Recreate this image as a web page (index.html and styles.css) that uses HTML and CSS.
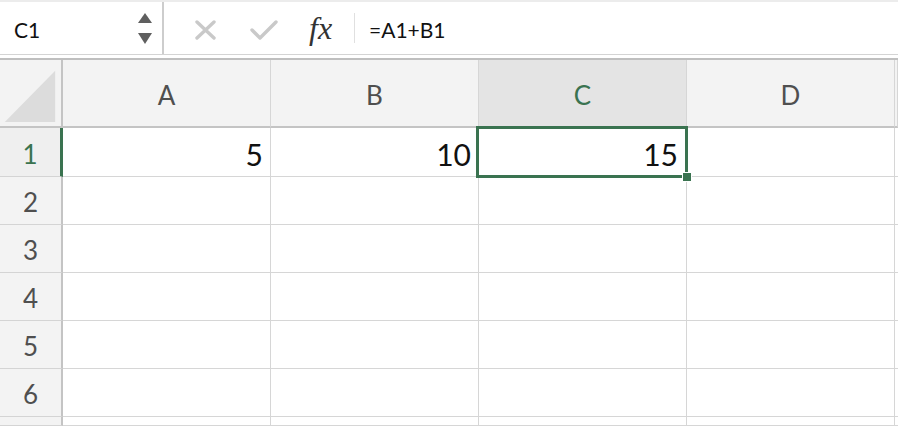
FILE: index.html
```html
<!DOCTYPE html>
<html>
<head>
<meta charset="utf-8">
<link rel="stylesheet" href="styles.css">
</head>
<body>
<div class="toolbar">
  <div class="namebox">
    <span class="name">C1</span>
    <svg class="spin" width="14" height="32" viewBox="0 0 14 32">
      <polygon points="0,10 14,10 7,0" fill="#5f5f5f"/>
      <polygon points="0,20 14,20 7,31" fill="#5f5f5f"/>
    </svg>
  </div>
  <svg class="ic-x" width="21" height="20" viewBox="0 0 21 20">
    <path d="M2 2 L19 18 M19 2 L2 18" stroke="#c9c9c9" stroke-width="3.4" stroke-linecap="round" fill="none"/>
  </svg>
  <svg class="ic-check" width="28" height="20" viewBox="0 0 28 20">
    <path d="M2 10 L10 18 L26 2" stroke="#c9c9c9" stroke-width="3.4" stroke-linecap="round" stroke-linejoin="round" fill="none"/>
  </svg>
  <span class="fx">fx</span>
  <span class="sep"></span>
  <span class="formula">=A1+B1</span>
</div>
<div class="gap"></div>
<div class="sheet">
  <div class="corner"><svg width="63" height="66" viewBox="0 0 63 66"><polygon points="57,10 57,63 5,63" fill="#dcdcdc"/></svg></div>
  <div class="colhead">A</div>
  <div class="colhead">B</div>
  <div class="colhead active">C</div>
  <div class="colhead">D</div>
  <div class="colhead"></div>

  <div class="rowhead active">1</div>
  <div class="cell">5</div>
  <div class="cell">10</div>
  <div class="cell selected">15<div class="sel"><span class="handle"></span></div></div>
  <div class="cell"></div>
  <div class="cell"></div>

  <div class="rowhead">2</div><div class="cell"></div><div class="cell"></div><div class="cell"></div><div class="cell"></div><div class="cell"></div>
  <div class="rowhead">3</div><div class="cell"></div><div class="cell"></div><div class="cell"></div><div class="cell"></div><div class="cell"></div>
  <div class="rowhead">4</div><div class="cell"></div><div class="cell"></div><div class="cell"></div><div class="cell"></div><div class="cell"></div>
  <div class="rowhead">5</div><div class="cell"></div><div class="cell"></div><div class="cell"></div><div class="cell"></div><div class="cell"></div>
  <div class="rowhead">6</div><div class="cell"></div><div class="cell"></div><div class="cell"></div><div class="cell"></div><div class="cell"></div>
  <div class="rowhead"></div><div class="cell"></div><div class="cell"></div><div class="cell"></div><div class="cell"></div><div class="cell"></div>
</div>
</body>
</html>
```
FILE: styles.css
```css
* { box-sizing: border-box; }
html, body { margin: 0; padding: 0; background: #fff; overflow: hidden; }
body { width: 898px; height: 427px; font-family: Lato, "Noto Sans", sans-serif; }

.toolbar {
  height: 55px;
  display: flex;
  align-items: center;
  border-top: 2px solid #ececec;
  border-bottom: 1px solid #d4d4d4;
}
.namebox {
  width: 164px;
  height: 100%;
  display: flex;
  align-items: center;
  justify-content: space-between;
  padding-left: 14px;
  padding-right: 10px;
  border-right: 2px solid #cdcdcd;
}
.name { font-size: 21px; color: #111; padding-top: 2px; }
.spin { margin-top: 2px; }
.ic-x { margin-left: 31px; margin-top: 4px; }
.ic-check { margin-left: 34px; margin-top: 4px; }
.fx {
  margin-left: 31px;
  font-family: "Liberation Serif", serif;
  font-style: italic;
  font-size: 32px;
  color: #333;
  width: 30px;
}
.sep { margin-left: 15px; width: 1px; height: 30px; background: #e0e0e0; }
.formula { margin-left: 14px; font-size: 21px; color: #111; padding-top: 2px; }

.gap { height: 5px; border-bottom: 2px solid #bfbfbf; }

.sheet {
  display: grid;
  grid-template-columns: 63px 208px 208px 208px 208px 3px;
  grid-template-rows: 68px 49px repeat(5, 48px) 9px;
}
.corner, .colhead, .rowhead {
  background: #f3f3f3;
  color: #4f4f4f;
  font-size: 26px;
  display: flex;
  align-items: center;
  justify-content: center;
  padding-top: 4px;
}
.corner { padding: 0; align-items: flex-end; border-right: 2px solid #c4c4c4; border-bottom: 2px solid #c4c4c4; }
.colhead { border-right: 1px solid #d6d6d6; border-bottom: 2px solid #c4c4c4; }
.colhead.active { background: #e4e4e4; color: #3a7350; }
.rowhead { border-right: 2px solid #c4c4c4; border-bottom: 1px solid #d4d4d4; padding-top: 3px; }
.rowhead.active { color: #3a7350; border-right: 3px solid #3a7350; background: #efefef; }

.cell {
  border-right: 1px solid #d6d6d6;
  border-bottom: 1px solid #d6d6d6;
  display: flex;
  align-items: center;
  justify-content: flex-end;
  padding-right: 7px;
  padding-top: 4px;
  font-size: 30px;
  color: #111;
}
.cell.selected { position: relative; padding-right: 8px; }
.sel {
  position: absolute;
  top: -2px; left: -3px; right: -2px; bottom: -2px;
  border: 3px solid #3a7350;
  z-index: 2;
}
.handle {
  position: absolute;
  right: -7px; bottom: -7px;
  width: 10px; height: 10px;
  background: #3a7350;
  border: 1px solid #fff;
}
```
